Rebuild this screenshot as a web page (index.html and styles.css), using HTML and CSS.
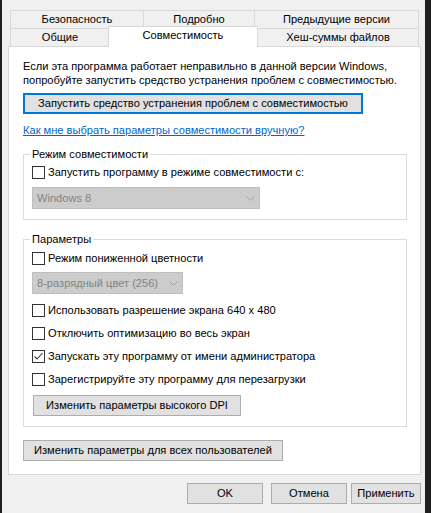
FILE: index.html
```html
<!DOCTYPE html>
<html lang="ru">
<head>
<meta charset="utf-8">
<title>Свойства</title>
<link rel="stylesheet" href="styles.css">
</head>
<body>
<div class="window">
  <div class="tabs">
    <div class="tabrow">
      <div class="tab t-sec">Безопасность</div>
      <div class="tab t-det">Подробно</div>
      <div class="tab t-prev">Предыдущие версии</div>
    </div>
    <div class="tabrow">
      <div class="tab t-gen">Общие</div>
      <div class="tab t-comp active">Совместимость</div>
      <div class="tab t-hash">Хеш-суммы файлов</div>
    </div>
  </div>
  <div class="panel">
    <p class="intro">Если эта программа работает неправильно в данной версии Windows, попробуйте запустить средство устранения проблем с совместимостью.</p>
    <button class="btn primary btn-trouble">Запустить средство устранения проблем с совместимостью</button>
    <a class="link" href="#">Как мне выбрать параметры совместимости вручную?</a>

    <fieldset class="group group-mode">
      <legend>Режим совместимости</legend>
      <label class="check first"><span class="cb"></span>Запустить программу в режиме совместимости с:</label>
      <div class="select sel-os"><span>Windows 8</span><svg class="chev" width="9" height="5" viewBox="0 0 9 5"><path d="M0.5 0.5 L4.5 4.5 L8.5 0.5" fill="none" stroke="#a6a6a6" stroke-width="1"/></svg></div>
    </fieldset>

    <fieldset class="group group-params">
      <legend>Параметры</legend>
      <label class="check first"><span class="cb"></span>Режим пониженной цветности</label>
      <div class="select sel-color"><span>8-разрядный цвет (256)</span><svg class="chev" width="9" height="5" viewBox="0 0 9 5"><path d="M0.5 0.5 L4.5 4.5 L8.5 0.5" fill="none" stroke="#a6a6a6" stroke-width="1"/></svg></div>
      <label class="check after-select"><span class="cb"></span>Использовать разрешение экрана 640 x 480</label>
      <label class="check"><span class="cb"></span>Отключить оптимизацию во весь экран</label>
      <label class="check"><span class="cb checked"><svg width="11" height="11" viewBox="0 0 11 11"><path d="M1.5 5.5 L4 8 L9.5 2" fill="none" stroke="#333" stroke-width="1.1"/></svg></span>Запускать эту программу от имени администратора</label>
      <label class="check"><span class="cb"></span>Зарегистрируйте эту программу для перезагрузки</label>
      <button class="btn btn-dpi">Изменить параметры высокого DPI</button>
    </fieldset>

    <button class="btn btn-all">Изменить параметры для всех пользователей</button>
  </div>
  <div class="footer">
    <button class="btn btn-ok">OK</button>
    <button class="btn btn-cancel">Отмена</button>
    <button class="btn btn-apply">Применить</button>
  </div>
</div>
</body>
</html>
```
FILE: styles.css
```css
* { box-sizing: border-box; }
html, body { margin: 0; padding: 0; }
body {
  background: #1f1f1f;
  font-family: "Liberation Sans", Arial, sans-serif;
  font-size: 11.1px;
  color: #000;
  height: 513px;
  overflow: hidden;
}
.window {
  margin-left: 2px;
  width: 423px;
  height: 513px;
  background: #f0f0f0;
  padding-top: 10px;
}

/* Tabs */
.tabs { margin-left: 8px; width: 409px; }
.tabrow { display: flex; align-items: flex-start; height: 18px; }
.tab {
  height: 18px;
  border: 1px solid #d9d9d9;
  border-bottom: none;
  background: #f0f0f0;
  text-align: center;
  line-height: 17px;
  white-space: nowrap;
}
.tab + .tab { margin-left: -1px; }
.t-sec { width: 134px; }
.t-det { width: 112px; }
.t-prev { width: 165px; }
.t-gen { width: 100px; }
.tab.active {
  width: 150px;
  height: 21px;
  margin-top: -2px;
  margin-left: -2px;
  background: #fff;
  position: relative;
  z-index: 1;
}
.t-hash { width: 162px; }

/* Panel */
.panel {
  margin-left: 6px;
  width: 413px;
  height: 429px;
  background: #fff;
  border: 1px solid #d9d9d9;
  padding: 12px 14px 0;
}
.intro { margin: 0; line-height: 14px; }

.btn {
  display: block;
  height: 21px;
  padding: 0;
  background: #e1e1e1;
  border: 1px solid #adadad;
  font: inherit;
  color: #000;
  line-height: 19px;
  text-align: center;
  white-space: nowrap;
}
.btn.primary { border: 2px solid #0078d7; line-height: 17px; }
.btn-trouble { width: 340px; margin-top: 6px; }

.link {
  display: inline-block;
  margin-top: 9px;
  line-height: 14px;
  color: #0066cc;
  text-decoration: underline;
}

/* Groups */
.group {
  margin: 10px 0 0;
  padding: 0 8px 10px;
  width: 384px;
  min-width: 0;
  border: 1px solid #dcdcdc;
}
.group legend {
  padding: 0 2px;
  margin-left: -2px;
  line-height: 14px;
}
.group-params { margin-top: 12px; }

.check {
  display: flex;
  align-items: center;
  gap: 3px;
  height: 16px;
  margin-top: 7px;
  white-space: nowrap;
}
.group-mode .check.first { margin-top: 3px; }
.group-params .check.first { margin-top: 4px; }
.check.after-select { margin-top: 8px; }
.cb {
  flex: none;
  width: 13px;
  height: 13px;
  border: 1px solid #333;
  background: #fff;
  display: flex;
  align-items: center;
  justify-content: center;
}

.select {
  display: flex;
  align-items: center;
  justify-content: space-between;
  height: 22px;
  background: #cccccc;
  border: 1px solid #bfbfbf;
  color: #838383;
  padding: 0 4px;
  white-space: nowrap;
}
.group-mode .select { width: 228px; margin-top: 7px; }
.group-params .select { width: 151px; margin-top: 6px; }
.chev { flex: none; }

.btn-dpi { width: 208px; margin: 8px 0 0 1px; }
.btn-all { width: 260px; margin-top: 13px; }

/* Footer */
.footer {
  display: flex;
  justify-content: flex-end;
  margin-top: 8px;
  padding-right: 4px;
}
.footer .btn { height: 21px; }
.btn-ok { width: 76px; }
.btn-cancel { width: 76px; margin-left: 8px; }
.btn-apply { width: 70px; margin-left: 4px; }
```
